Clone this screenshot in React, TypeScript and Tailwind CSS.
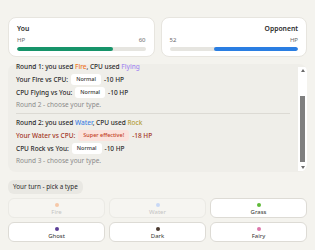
import { useLayoutEffect, useRef } from "react";

type Line = { who: string; badge: string; superEff?: boolean; dmg: string };

type Round = {
  head: React.ReactNode;
  lines: Line[];
  next: string;
};

const rounds: Round[] = [
  {
    head: (
      <>
        Round 1: you used <span className="text-[#ee7424]">Fire</span>, CPU used{" "}
        <span className="text-[#a68cf0]">Flying</span>
      </>
    ),
    lines: [
      { who: "Your Fire vs CPU:", badge: "Normal", dmg: "-10 HP" },
      { who: "CPU Flying vs You:", badge: "Normal", dmg: "-10 HP" },
    ],
    next: "Round 2 - choose your type.",
  },
  {
    head: (
      <>
        Round 2: you used <span className="text-[#3b7fe2]">Water</span>, CPU used{" "}
        <span className="text-[#b5a03a]">Rock</span>
      </>
    ),
    lines: [
      { who: "Your Water vs CPU:", badge: "Super effective!", superEff: true, dmg: "-18 HP" },
      { who: "CPU Rock vs You:", badge: "Normal", dmg: "-10 HP" },
    ],
    next: "Round 3 - choose your type.",
  },
];

const types = [
  { name: "Fire", dot: "bg-[#f6c8a8]", disabled: true },
  { name: "Water", dot: "bg-[#c8d8f6]", disabled: true },
  { name: "Grass", dot: "bg-[#5fba38]", disabled: false },
  { name: "Ghost", dot: "bg-[#5b3f96]", disabled: false },
  { name: "Dark", dot: "bg-[#4b3a2f]", disabled: false },
  { name: "Fairy", dot: "bg-[#dd78ab]", disabled: false },
];

function HpCard({ name, hp, max, color, right }: { name: string; hp: number; max: number; color: string; right?: boolean }) {
  const pct = (hp / max) * 100;
  return (
    <div className="rounded-lg border border-[#e7e5df] bg-white px-2 pt-[6px] pb-[5px]">
      <div className={`text-[6.8px] font-semibold leading-[9px] ${right ? "text-right" : ""}`}>{name}</div>
      <div className="mt-[3px] flex justify-between text-[6px] leading-[8px] text-[#6b6b6b]">
        <span>{right ? hp : "HP"}</span>
        <span>{right ? "HP" : hp}</span>
      </div>
      <div className={`mt-[3px] flex h-[4px] overflow-hidden rounded-full bg-[#e6e5e0] ${right ? "justify-end" : ""}`}>
        <div className={`h-full rounded-full ${color}`} style={{ width: `${pct}%` }} />
      </div>
    </div>
  );
}

export default function App() {
  const logRef = useRef<HTMLDivElement>(null);

  useLayoutEffect(() => {
    if (logRef.current) logRef.current.scrollTop = logRef.current.scrollHeight;
  }, []);

  return (
    <div className="min-h-screen bg-[#f4f3ee] px-2 pt-[17px] font-['Noto_Sans',sans-serif] text-[#2b2b2b]">
      {/* HP cards */}
      <div className="grid grid-cols-2 gap-1.5">
        <HpCard name="You" hp={60} max={80} color="bg-[#17946a]" />
        <HpCard name="Opponent" hp={52} max={80} color="bg-[#2a7ee2]" right />
      </div>

      {/* Battle log */}
      <div className="mt-[7px] flex h-[108px] overflow-hidden rounded-lg bg-[#efeee9]">
        <div
          ref={logRef}
          className="flex-1 overflow-y-auto px-2 pt-[6px] pb-[3px] text-[6.5px] font-medium [scrollbar-width:none]"
        >
          <div className="divide-y divide-[#dcdad4]">
            <div className="py-[3px]">
              <div className="leading-[12px]">A wild CPU wants to battle!</div>
              <div className="font-normal leading-[11px] text-[#8a8a8a]">Round 1 - choose your type.</div>
            </div>
            {rounds.map((r, i) => (
              <div key={i} className="py-[3px]">
                <div className="leading-[12px]">{r.head}</div>
                {r.lines.map((l, j) => (
                  <div key={j} className={`flex h-[13px] items-center gap-[3px] ${l.superEff ? "text-[#a3361f]" : ""}`}>
                    <span>{l.who}</span>
                    <span
                      className={`rounded-[3px] px-[5px] text-[5.5px] leading-[11px] ${
                        l.superEff ? "bg-[#fbe2dc] text-[#c23a22]" : "bg-white text-[#333]"
                      }`}
                    >
                      {l.badge}
                    </span>
                    <span>{l.dmg}</span>
                  </div>
                ))}
                <div className="font-normal leading-[11px] text-[#8a8a8a]">{r.next}</div>
              </div>
            ))}
          </div>
        </div>

        {/* scrollbar */}
        <div className="mt-[3px] mb-[1px] flex w-[9px] flex-col items-center bg-white">
          <div className="flex h-[7px] items-center">
            <span className="border-x-[2.5px] border-b-[3px] border-x-transparent border-b-[#6b6b6b]" />
          </div>
          <div className="flex flex-1 flex-col justify-end pb-[2px]">
            <div className="h-[66px] w-[5px] bg-[#7f7f7f]" />
          </div>
          <div className="flex h-[7px] items-center">
            <span className="border-x-[2.5px] border-t-[3px] border-x-transparent border-t-[#6b6b6b]" />
          </div>
        </div>
      </div>

      {/* Turn prompt */}
      <div className="mt-2 w-fit rounded-md bg-[#e9e8e3] px-[5px] py-[3px] text-[6.3px] leading-[8px]">Your turn - pick a type</div>

      {/* Type buttons */}
      <div className="mt-1 grid grid-cols-3 gap-1">
        {types.map((t) => (
          <button
            key={t.name}
            disabled={t.disabled}
            className={`flex h-5 flex-col items-center rounded-md border pt-[4px] ${
              t.disabled ? "border-[#ebeae5] bg-[#f6f5f1] text-[#c4c4c4]" : "border-[#dddbd5] bg-white text-[#333]"
            }`}
          >
            <span className={`h-[4px] w-[4px] rounded-full ${t.dot}`} />
            <span className="mt-[1px] text-[6px] leading-[8px]">{t.name}</span>
          </button>
        ))}
      </div>
    </div>
  );
}
